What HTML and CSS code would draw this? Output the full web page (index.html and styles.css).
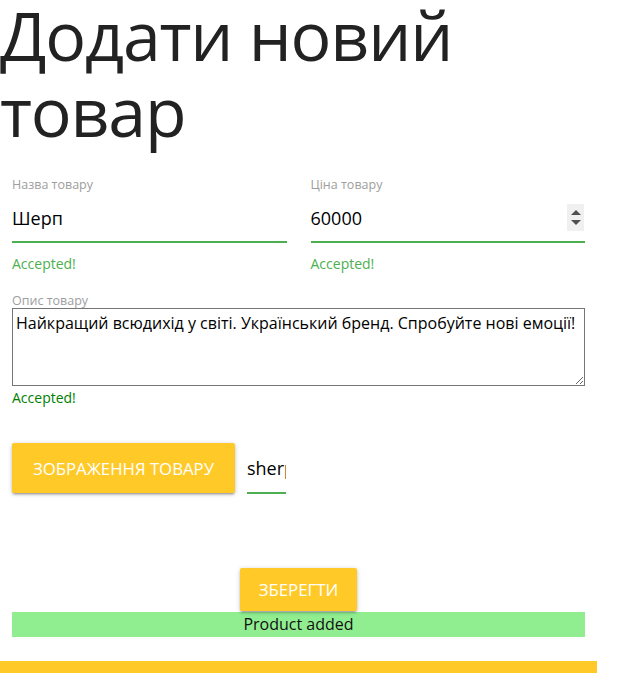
FILE: index.html
```html
<!DOCTYPE html>
<html lang="uk">
<head>
<meta charset="utf-8">
<title>Додати новий товар</title>
<link rel="stylesheet" href="styles.css">
</head>
<body>
<div class="page">
  <h1 class="title">Додати новий товар</h1>
  <form class="form">
    <div class="row">
      <div class="field">
        <label class="field-label">Назва товару</label>
        <div class="line-input"><input class="text" type="text" value="Шерп"></div>
        <div class="helper">Accepted!</div>
      </div>
      <div class="field">
        <label class="field-label">Ціна товару</label>
        <div class="line-input">
          <input class="text" type="text" value="60000">
          <span class="spinner"><span class="up"></span><span class="down"></span></span>
        </div>
        <div class="helper">Accepted!</div>
      </div>
    </div>
    <div class="desc">
      <label class="desc-label">Опис товару</label>
      <textarea class="area">Найкращий всюдихід у світі. Український бренд. Спробуйте нові емоції!</textarea>
      <div class="helper dark">Accepted!</div>
    </div>
    <div class="file-row">
      <button type="button" class="btn btn-file">Зображення товару</button>
      <div class="path"><input class="path-input" type="text" value="sherp.jpg"></div>
    </div>
    <div class="save-row">
      <button type="button" class="btn btn-save">Зберегти</button>
    </div>
    <div class="notice">Product added</div>
  </form>
  <div class="footer-bar"></div>
</div>
</body>
</html>
```

FILE: styles.css
```css
* { box-sizing: border-box; }
html, body { margin: 0; padding: 0; background: #fff; }
body {
  font-family: "Open Sans", "Noto Sans", sans-serif;
  color: #000;
}
.page { width: 597px; }
.title {
  margin: -3px 0 0 0;
  font-weight: 400;
  font-size: 68px;
  line-height: 76px;
  color: #222;
  letter-spacing: -1.2px;
}
.form { margin-top: 28px; }
.row { display: grid; grid-template-columns: 1fr 1fr; }
.field { padding: 0 12px; }
.field-label {
  display: block;
  font-size: 12.5px;
  line-height: 16px;
  height: 16px;
  color: #9e9e9e;
}
.line-input {
  margin-top: 2px;
  height: 48px;
  display: flex;
  align-items: center;
  border-bottom: 2px solid #4caf50;
}
.text {
  flex: 1;
  min-width: 0;
  border: 0;
  outline: 0;
  padding: 0;
  font-family: inherit;
  font-size: 18px;
  color: #000;
  background: transparent;
}
.spinner {
  width: 17px;
  height: 27px;
  background: #f0f0f0;
  display: flex;
  flex-direction: column;
  align-items: center;
  justify-content: center;
  gap: 5px;
  margin-right: 1px;
  margin-top: -2px;
}
.up, .down { width: 0; height: 0; border-left: 5px solid transparent; border-right: 5px solid transparent; }
.up { border-bottom: 5px solid #505050; }
.down { border-top: 5px solid #505050; }
.helper {
  margin-top: 13px;
  font-size: 14px;
  line-height: 16px;
  color: #4caf50;
}
.helper.dark { margin-top: 4px; color: #008000; }
.desc { padding: 0 12px; margin-top: 22px; }
.desc-label {
  display: block;
  font-size: 12.5px;
  line-height: 14px;
  color: #9e9e9e;
}
.area {
  display: block;
  width: 100%;
  height: 78px;
  border: 1px solid #767676;
  padding: 2px 3px;
  font-family: inherit;
  font-size: 16px;
  line-height: 24px;
  resize: both;
  color: #000;
}
.file-row {
  display: flex;
  align-items: flex-start;
  margin-top: 37px;
  padding: 0 12px;
}
.btn {
  border: 0;
  border-radius: 2px;
  background: #ffca28;
  color: #fff;
  font-family: inherit;
  font-size: 16.8px;
  text-transform: uppercase;
  box-shadow: 0 2px 2px 0 rgba(0,0,0,.14), 0 3px 1px -2px rgba(0,0,0,.12), 0 1px 5px 0 rgba(0,0,0,.2);
  padding: 0;
}
.btn-file { width: 223px; height: 50px; }
.path {
  margin-left: 12px;
  width: 39px;
  height: 51px;
  display: flex;
  align-items: center;
  border-bottom: 2px solid #4caf50;
  overflow: hidden;
}
.path-input {
  width: 39px;
  border: 0;
  outline: 0;
  padding: 0;
  font-family: inherit;
  font-size: 18px;
  color: #000;
}
.save-row { display: flex; justify-content: center; margin-top: 74px; }
.btn-save { width: 117px; height: 43px; }
.notice {
  margin: 1px 12px 0;
  height: 25px;
  background: #90ee90;
  text-align: center;
  font-size: 16px;
  line-height: 25px;
  color: #111;
}
.footer-bar { margin-top: 24px; height: 40px; background: #ffca28; }
```
